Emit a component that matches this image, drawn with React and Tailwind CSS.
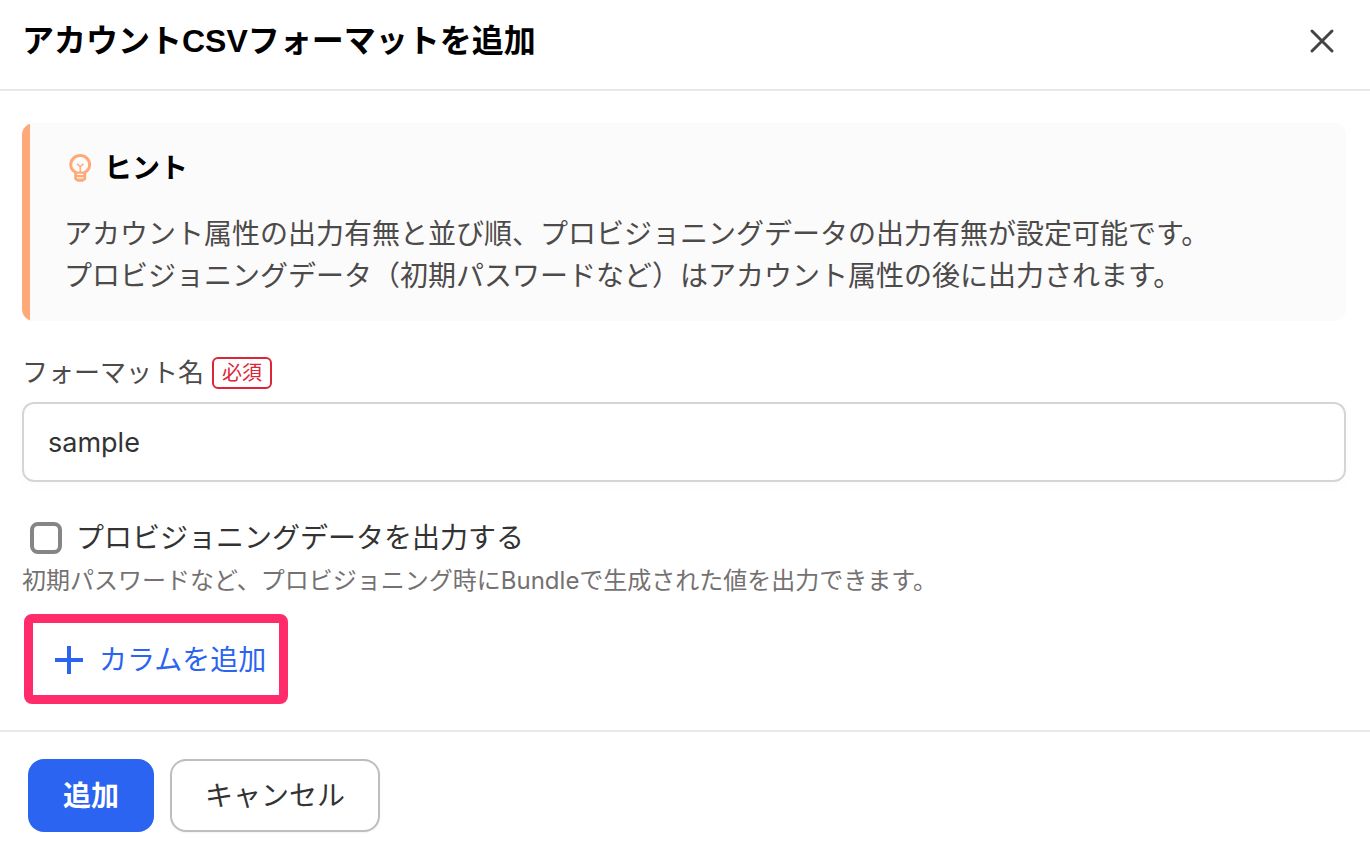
import React, { useState } from 'react';

const LightBulbIcon = () => (
  <svg className="w-8 h-8 shrink-0" viewBox="0 0 32 32" fill="none" stroke="#ffa978" aria-hidden="true">
    <path
      d="M12 20.500C8.700 19 6.800 16.200 6.800 12.800a9.400 9.400 0 0 1 18.800 0c0 3.400-1.900 6.200-5.200 7.700"
      strokeWidth="3"
    />
    <path d="M16.200 20v-5.500M13 11.800l3.200 3 3.200-3" strokeWidth="1.500" />
    <path
      d="M10.200 19.500h12v7a2 2 0 0 1-1.300 1.900c-.8.300-1.300.6-1.900 1.300h-5.600c-.6-.7-1.100-1-1.900-1.300a2 2 0 0 1-1.300-1.900z"
      fill="#ffa978"
      stroke="none"
    />
    <path d="M13 22.300h6.400M13 25.800h6.400" stroke="#fbfbfb" strokeWidth="1.300" />
  </svg>
);

const CloseIcon = () => (
  <svg className="w-7 h-7" viewBox="0 0 28 28" fill="none" stroke="currentColor" strokeWidth="3" strokeLinecap="round" aria-hidden="true">
    <path d="M4 4l20 20M24 4L4 24" />
  </svg>
);

const PlusIcon = () => (
  <svg className="w-7 h-7" viewBox="0 0 28 28" fill="none" stroke="currentColor" strokeWidth="4" aria-hidden="true">
    <path d="M14 0v28M0 14h28" />
  </svg>
);

const App = () => {
  const [name, setName] = useState('sample');
  const [outputProvisioning, setOutputProvisioning] = useState(false);

  const handleSubmit = (e) => {
    e.preventDefault();
  };

  return (
    <form
      onSubmit={handleSubmit}
      className="bg-white text-[#333333] text-[28px] leading-[42px] font-['Inter','Noto_Sans_CJK_JP',sans-serif]"
    >
      <header className="flex items-center justify-between border-b-2 border-[#ebe7e7] pl-[22px] pr-8 pt-[17px] pb-6">
        <h1 className="text-[32px] leading-[48px] font-bold text-black font-['Liberation_Sans','Noto_Sans_CJK_JP',sans-serif]">
          アカウントCSVフォーマットを追加
        </h1>
        <button type="button" aria-label="閉じる" className="p-0.5 text-[#444444]">
          <CloseIcon />
        </button>
      </header>

      <main className="pl-[22px] pr-6 pt-8 pb-[26px]">
        <section className="flex overflow-hidden rounded-xl bg-[#fbfbfb]">
          <div className="w-2 shrink-0 bg-[#ffa978]" />
          <div className="flex-1 px-[34px] pt-6 pb-6">
            <div className="flex items-center gap-2">
              <LightBulbIcon />
              <h2 className="font-bold text-black">ヒント</h2>
            </div>
            <p className="mt-6 text-[#4d4a4a]">
              アカウント属性の出力有無と並び順、プロビジョニングデータの出力有無が設定可能です。
              <br />
              プロビジョニングデータ（初期パスワードなど）はアカウント属性の後に出力されます。
            </p>
          </div>
        </section>

        <div className="mt-9 flex items-center gap-2">
          <label htmlFor="format-name" className="text-[26px] leading-8 text-[#4d4a4a]">
            フォーマット名
          </label>
          <span className="rounded-md border-2 border-[#dc2638] px-2 text-[20px] leading-7 text-[#dc2638]">
            必須
          </span>
        </div>
        <input
          id="format-name"
          type="text"
          required
          value={name}
          onChange={(e) => setName(e.target.value)}
          className="mt-[13px] block h-20 w-full rounded-xl border-2 border-[#d9d4d4] bg-white px-6 text-[27px] shadow-[0_4px_16px_rgba(0,0,0,0.02)]"
        />

        <div className="mt-[35px] flex items-center gap-[14px] pl-2">
          <input
            id="output-provisioning"
            type="checkbox"
            checked={outputProvisioning}
            onChange={(e) => setOutputProvisioning(e.target.checked)}
            className="h-8 w-8 appearance-none rounded-lg border-4 border-[#858585] bg-white checked:bg-[#2a64f0]"
          />
          <label htmlFor="output-provisioning">プロビジョニングデータを出力する</label>
        </div>
        <p className="mt-1 text-2xl leading-9 text-[#757171]">
          初期パスワードなど、プロビジョニング時にBundleで生成された値を出力できます。
        </p>

        <button
          type="button"
          className="ml-0.5 mt-[15px] flex h-[90px] items-center gap-4 rounded-lg border-[9px] border-[#ff2b6a] pl-[22px] pr-[13px] pt-0.5 text-[#2a64f0]"
        >
          <PlusIcon />
          カラムを追加
        </button>
      </main>

      <footer className="flex gap-4 border-t-2 border-[#ebe7e7] px-7 pt-[27px] pb-5">
        <button type="submit" className="h-[73px] rounded-2xl bg-[#2a64f0] px-[35px] font-bold text-white">
          追加
        </button>
        <button
          type="button"
          className="h-[73px] rounded-2xl border-2 border-[#c2bdbd] bg-white px-[33px] shadow-xs"
        >
          キャンセル
        </button>
      </footer>
    </form>
  );
};

export default App;
